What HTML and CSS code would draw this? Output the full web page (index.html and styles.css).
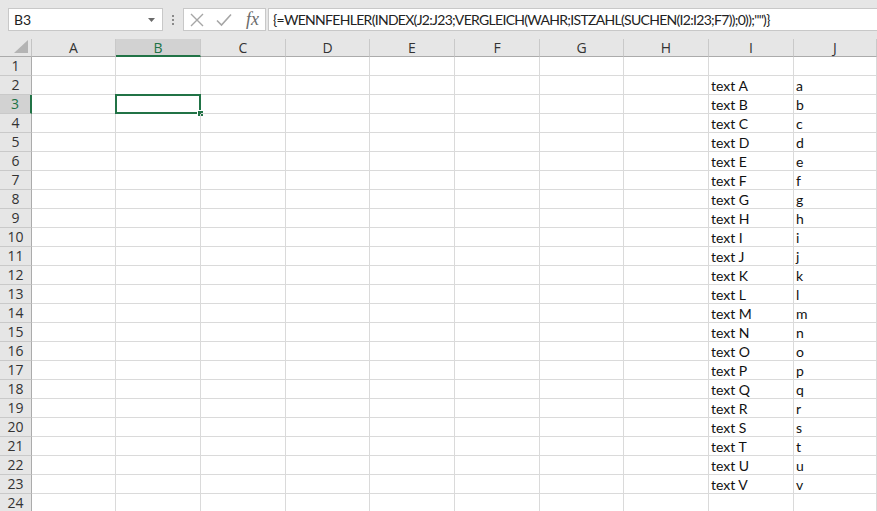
FILE: index.html
```html
<!DOCTYPE html>
<html>
<head>
<meta charset="utf-8">
<link rel="stylesheet" href="styles.css">
</head>
<body>
<div class="toolbar">
  <div class="namebox">
    <span class="name">B3</span>
    <svg class="ddarrow" width="7" height="4" viewBox="0 0 7 4"><polygon points="0,0 7,0 3.5,4" fill="#6a6a6a"/></svg>
  </div>
  <div class="grip"><span></span><span></span><span></span></div>
  <div class="iconbox">
    <svg class="ico" width="14" height="14" viewBox="0 0 14 14"><path d="M1 1 L13 13 M13 1 L1 13" stroke="#a6a6a6" stroke-width="1.4" fill="none"/></svg>
    <svg class="ico" width="16" height="14" viewBox="0 0 16 14"><path d="M1 7.5 L5.5 12 L15 1.5" stroke="#a6a6a6" stroke-width="1.6" fill="none"/></svg>
    <span class="fx">fx</span>
  </div>
  <div class="formula">{=WENNFEHLER(INDEX(J2:J23;VERGLEICH(WAHR;ISTZAHL(SUCHEN(I2:I23;F7));0));"")}</div>
</div>
<div class="sheet" id="sheet">
  <div class="corner"><svg width="14" height="13" viewBox="0 0 14 13"><polygon points="14,0 14,13 0,13" fill="#b4b4b4"/></svg></div>
  <div class="ch">A</div><div class="ch sel">B</div><div class="ch">C</div><div class="ch">D</div><div class="ch">E</div><div class="ch">F</div><div class="ch">G</div><div class="ch">H</div><div class="ch">I</div><div class="ch">J</div>
</div>
<script src="script.js"></script>
</body>
</html>
```

FILE: script.js
```js
(function(){
  var sheet = document.getElementById('sheet');
  var letters = 'ABCDEFGHIJKLMNOPQRSTUV';
  var html = '';
  for (var r = 1; r <= 24; r++) {
    html += '<div class="rh' + (r === 3 ? ' sel' : '') + '">' + r + '</div>';
    for (var c = 0; c < 10; c++) {
      var txt = '';
      if (r >= 2 && r <= 23) {
        if (c === 8) txt = 'text ' + letters[r - 2];
        if (c === 9) txt = letters[r - 2].toLowerCase();
      }
      var cls = 'cell';
      var inner = txt;
      if (r === 3 && c === 1) { cls += ' active'; inner = '<span class="cursor"></span><span class="handle"></span>'; }
      html += '<div class="' + cls + '">' + inner + '</div>';
    }
  }
  sheet.insertAdjacentHTML('beforeend', html);
})();
```

FILE: styles.css
```css
html, body {
  margin: 0;
  padding: 0;
  background: #ffffff;
  overflow: hidden;
}
body {
  width: 877px;
  height: 511px;
  font-family: "Open Sans", "Noto Sans", sans-serif;
}
.toolbar {
  display: flex;
  align-items: center;
  height: 39px;
  padding: 8px 0 8px 8px;
  box-sizing: border-box;
  background: #e6e6e6;
}
.namebox {
  width: 155px;
  height: 23px;
  box-sizing: border-box;
  background: #fff;
  border: 1px solid #c8c8c8;
  display: flex;
  align-items: center;
  justify-content: space-between;
  padding: 0 7px 0 5px;
  font-family: Lato, "Open Sans", sans-serif;
  font-size: 14px;
  color: #222;
}
.grip {
  width: 20px;
  display: flex;
  flex-direction: column;
  align-items: center;
  gap: 2px;
}
.grip span {
  width: 2px;
  height: 2px;
  background: #8a8a8a;
}
.iconbox {
  width: 83px;
  height: 23px;
  box-sizing: border-box;
  background: #fff;
  border: 1px solid #c8c8c8;
  display: flex;
  align-items: center;
  padding-left: 6px;
  gap: 12px;
}
.fx {
  font-family: "Liberation Serif", serif;
  font-style: italic;
  font-size: 18px;
  color: #6a6a6a;
  margin-left: 2px;
}
.formula {
  flex: 1;
  height: 23px;
  box-sizing: border-box;
  margin-left: 2px;
  background: #fff;
  border: 1px solid #c8c8c8;
  border-right: none;
  padding: 0 0 0 4px;
  line-height: 21px;
  font-family: Lato, "Open Sans", sans-serif;
  font-size: 14px;
  letter-spacing: -0.7px;
  color: #222;
  white-space: nowrap;
  overflow: hidden;
}
.sheet {
  display: grid;
  grid-template-columns: 32px 84px 85px 85px 84px 85px 85px 84px 85px 85px 1fr;
  grid-template-rows: 18px;
  grid-auto-rows: 19px;
}
.corner, .ch, .rh {
  background: #e6e6e6;
  box-sizing: border-box;
  color: #333;
  font-size: 14px;
}
.corner {
  border-right: 1px solid #c4c4c4;
  border-bottom: 1px solid #ababab;
  display: flex;
  align-items: flex-end;
  justify-content: flex-end;
  padding: 0 3px 3px 0;
}
.corner svg { display: block; }
.ch {
  border-right: 1px solid #c9c9c9;
  border-bottom: 1px solid #ababab;
  text-align: center;
  line-height: 18px;
}
.ch.sel {
  background: #d2d2d2;
  color: #217346;
  border-bottom: 2px solid #217346;
}
.rh {
  border-right: 1px solid #ababab;
  border-bottom: 1px solid #c9c9c9;
  text-align: center;
  line-height: 18px;
}
.rh.sel {
  background: #d2d2d2;
  color: #217346;
  border-right: 2px solid #217346;
}
.cell {
  box-sizing: border-box;
  border-right: 1px solid #dadada;
  border-bottom: 1px solid #dadada;
  padding-left: 2px;
  font-family: Lato, "Open Sans", sans-serif;
  font-size: 14px;
  line-height: 20px;
  color: #111;
  white-space: nowrap;
  position: relative;
}
.cell.active { overflow: visible; }
.cursor {
  position: absolute;
  left: -1px;
  top: -1px;
  right: -1px;
  bottom: -1px;
  border: 2px solid #217346;
}
.handle {
  position: absolute;
  right: -4px;
  bottom: -4px;
  width: 5px;
  height: 5px;
  background: #217346;
  border: 1px solid #fff;
}
```
